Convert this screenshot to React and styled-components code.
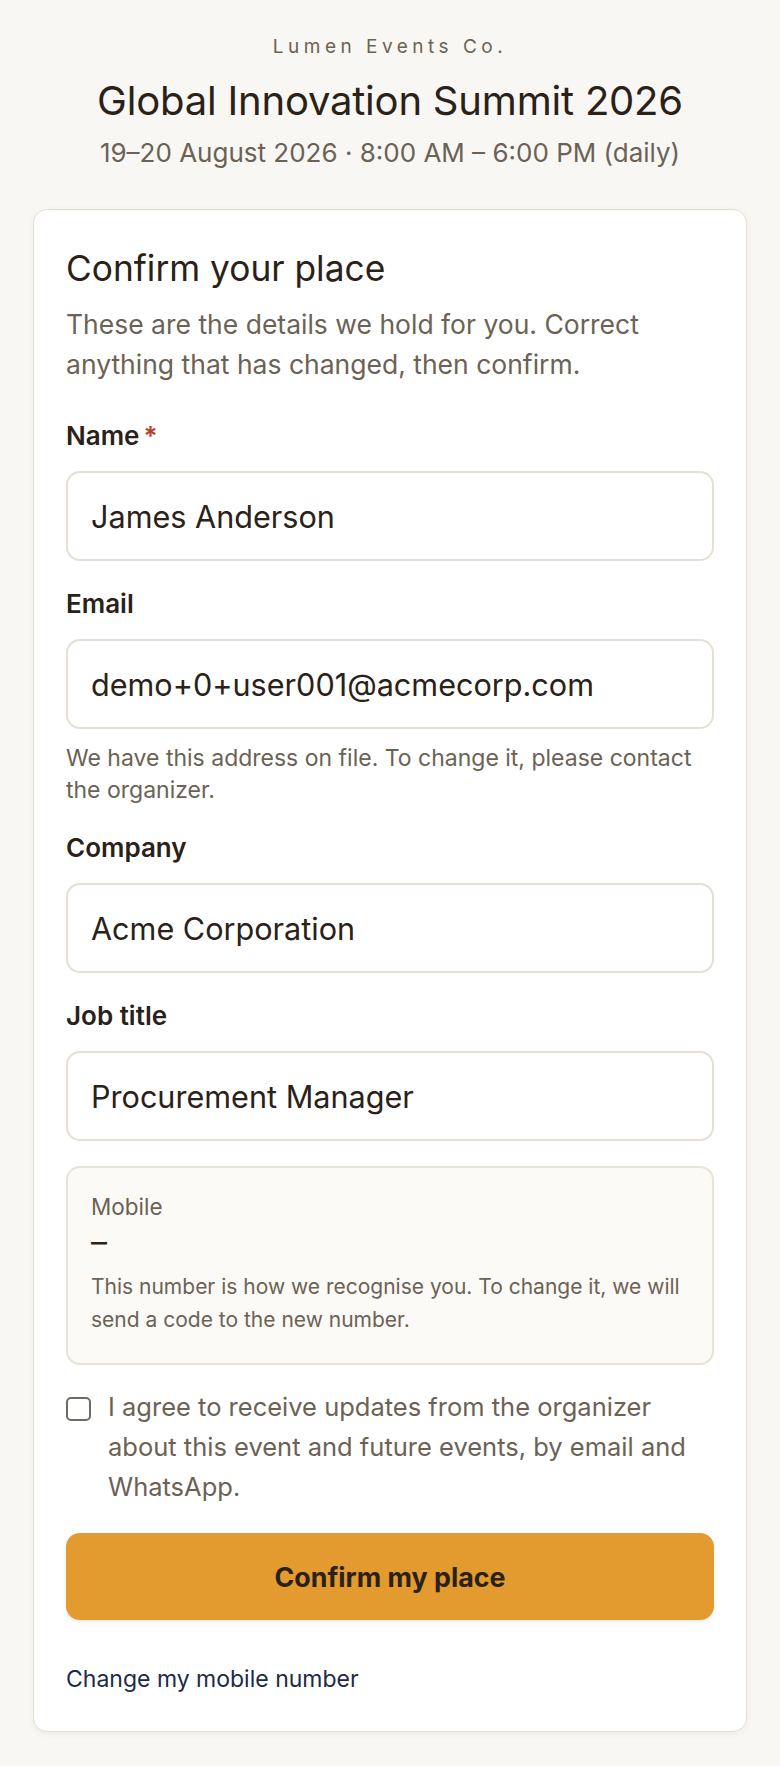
import React from 'react';
import styled, { createGlobalStyle } from 'styled-components';

const GlobalStyle = createGlobalStyle`
  * { box-sizing: border-box; }
  body {
    margin: 0;
    background: #f9f7f3;
    font-family: Inter, "Noto Sans", sans-serif;
    color: #2a2118;
  }
`;

const Page = styled.div`
  padding: 35px 33px 35px 33px;
`;

const Header = styled.header`
  text-align: center;
`;

const Brand = styled.div`
  font-size: 19px;
  line-height: 24px;
  letter-spacing: 4.5px;
  color: #6b6255;
`;

const Title = styled.h1`
  margin: 20px 0 0;
  font-size: 40px;
  line-height: 44px;
  font-weight: 400;
  letter-spacing: -0.2px;
`;

const DateLine = styled.div`
  margin-top: 14px;
  font-size: 26px;
  line-height: 32px;
  color: #6b6255;
`;

const Card = styled.main`
  margin-top: 40px;
  background: #fff;
  border: 1px solid #e5e0d3;
  border-radius: 14px;
  box-shadow: 0 2px 6px rgba(80, 60, 20, 0.06);
  padding: 40px 32px 37px;
  display: flex;
  flex-direction: column;
`;

const Heading = styled.h2`
  margin: 0;
  font-size: 35.3px;
  line-height: 38px;
  font-weight: 400;
`;

const Intro = styled.p`
  margin: 16px 0 0;
  font-size: 26.5px;
  line-height: 40px;
  color: #6b6255;
`;

const Field = styled.div`
  margin-top: ${p => p.$gap}px;
  display: flex;
  flex-direction: column;
`;

const Label = styled.label`
  font-size: 26px;
  line-height: 28px;
  font-weight: 600;
  margin-bottom: 21px;
`;

const Required = styled.span`
  color: #b8412c;
  margin-left: 4px;
`;

const Input = styled.input`
  height: 90px;
  border: 2px solid #e5e0d3;
  border-radius: 14px;
  padding: 0 23px;
  font-family: inherit;
  font-size: 30.6px;
  color: #2a2118;
  background: #fff;
  outline: none;
`;

const Hint = styled.p`
  margin: 13px 0 0;
  font-size: 23px;
  line-height: 32px;
  color: #6b6255;
`;

const MobileBox = styled.div`
  margin-top: 25px;
  background: #fcfaf6;
  border: 2px solid #e8e3d7;
  border-radius: 14px;
  padding: 25px 23px 27px;
`;

const MobileLabel = styled.div`
  font-size: 22.5px;
  line-height: 28px;
  color: #6b6255;
`;

const MobileValue = styled.div`
  font-size: 32px;
  line-height: 30px;
  font-weight: 400;
  margin-top: 6px;
`;

const MobileHint = styled.p`
  margin: 13px 0 0;
  font-size: 21px;
  line-height: 33px;
  color: #6b6255;
`;

const Consent = styled.label`
  margin-top: 22px;
  display: flex;
  align-items: flex-start;
  gap: 17px;
  font-size: 25.5px;
  line-height: 40px;
  color: #6b6255;
`;

const Box = styled.input`
  appearance: none;
  flex: none;
  width: 25px;
  height: 24px;
  margin: 10px 0 0;
  border: 2px solid #6e6a64;
  border-radius: 5px;
  background: #fff;
`;

const Button = styled.button`
  margin-top: 26px;
  height: 87px;
  border: none;
  border-radius: 14px;
  background: #e39a2f;
  color: #2a2118;
  font-family: inherit;
  font-size: 26.8px;
  font-weight: 700;
  box-shadow: 0 2px 4px rgba(120, 80, 20, 0.12);
`;

const ChangeLink = styled.a`
  margin-top: 44px;
  font-size: 23px;
  line-height: 30px;
  color: #1c2a48;
  text-decoration: none;
`;

export default function App() {
  return (
    <>
      <GlobalStyle />
      <Page>
        <Header>
          <Brand>Lumen Events Co.</Brand>
          <Title>Global Innovation Summit 2026</Title>
          <DateLine>19–20 August 2026 · 8:00 AM – 6:00 PM (daily)</DateLine>
        </Header>
        <Card>
          <Heading>Confirm your place</Heading>
          <Intro>These are the details we hold for you. Correct anything that has changed, then confirm.</Intro>

          <Field $gap={38}>
            <Label>Name<Required>*</Required></Label>
            <Input defaultValue="James Anderson" />
          </Field>

          <Field $gap={29}>
            <Label>Email</Label>
            <Input defaultValue="demo+0+user001@acmecorp.com" />
            <Hint>We have this address on file. To change it, please contact the organizer.</Hint>
          </Field>

          <Field $gap={28}>
            <Label>Company</Label>
            <Input defaultValue="Acme Corporation" />
          </Field>

          <Field $gap={29}>
            <Label>Job title</Label>
            <Input defaultValue="Procurement Manager" />
          </Field>

          <MobileBox>
            <MobileLabel>Mobile</MobileLabel>
            <MobileValue>–</MobileValue>
            <MobileHint>This number is how we recognise you. To change it, we will send a code to the new number.</MobileHint>
          </MobileBox>

          <Consent>
            <Box type="checkbox" />
            <span>I agree to receive updates from the organizer about this event and future events, by email and WhatsApp.</span>
          </Consent>

          <Button type="button">Confirm my place</Button>

          <ChangeLink href="#">Change my mobile number</ChangeLink>
        </Card>
      </Page>
    </>
  );
}
